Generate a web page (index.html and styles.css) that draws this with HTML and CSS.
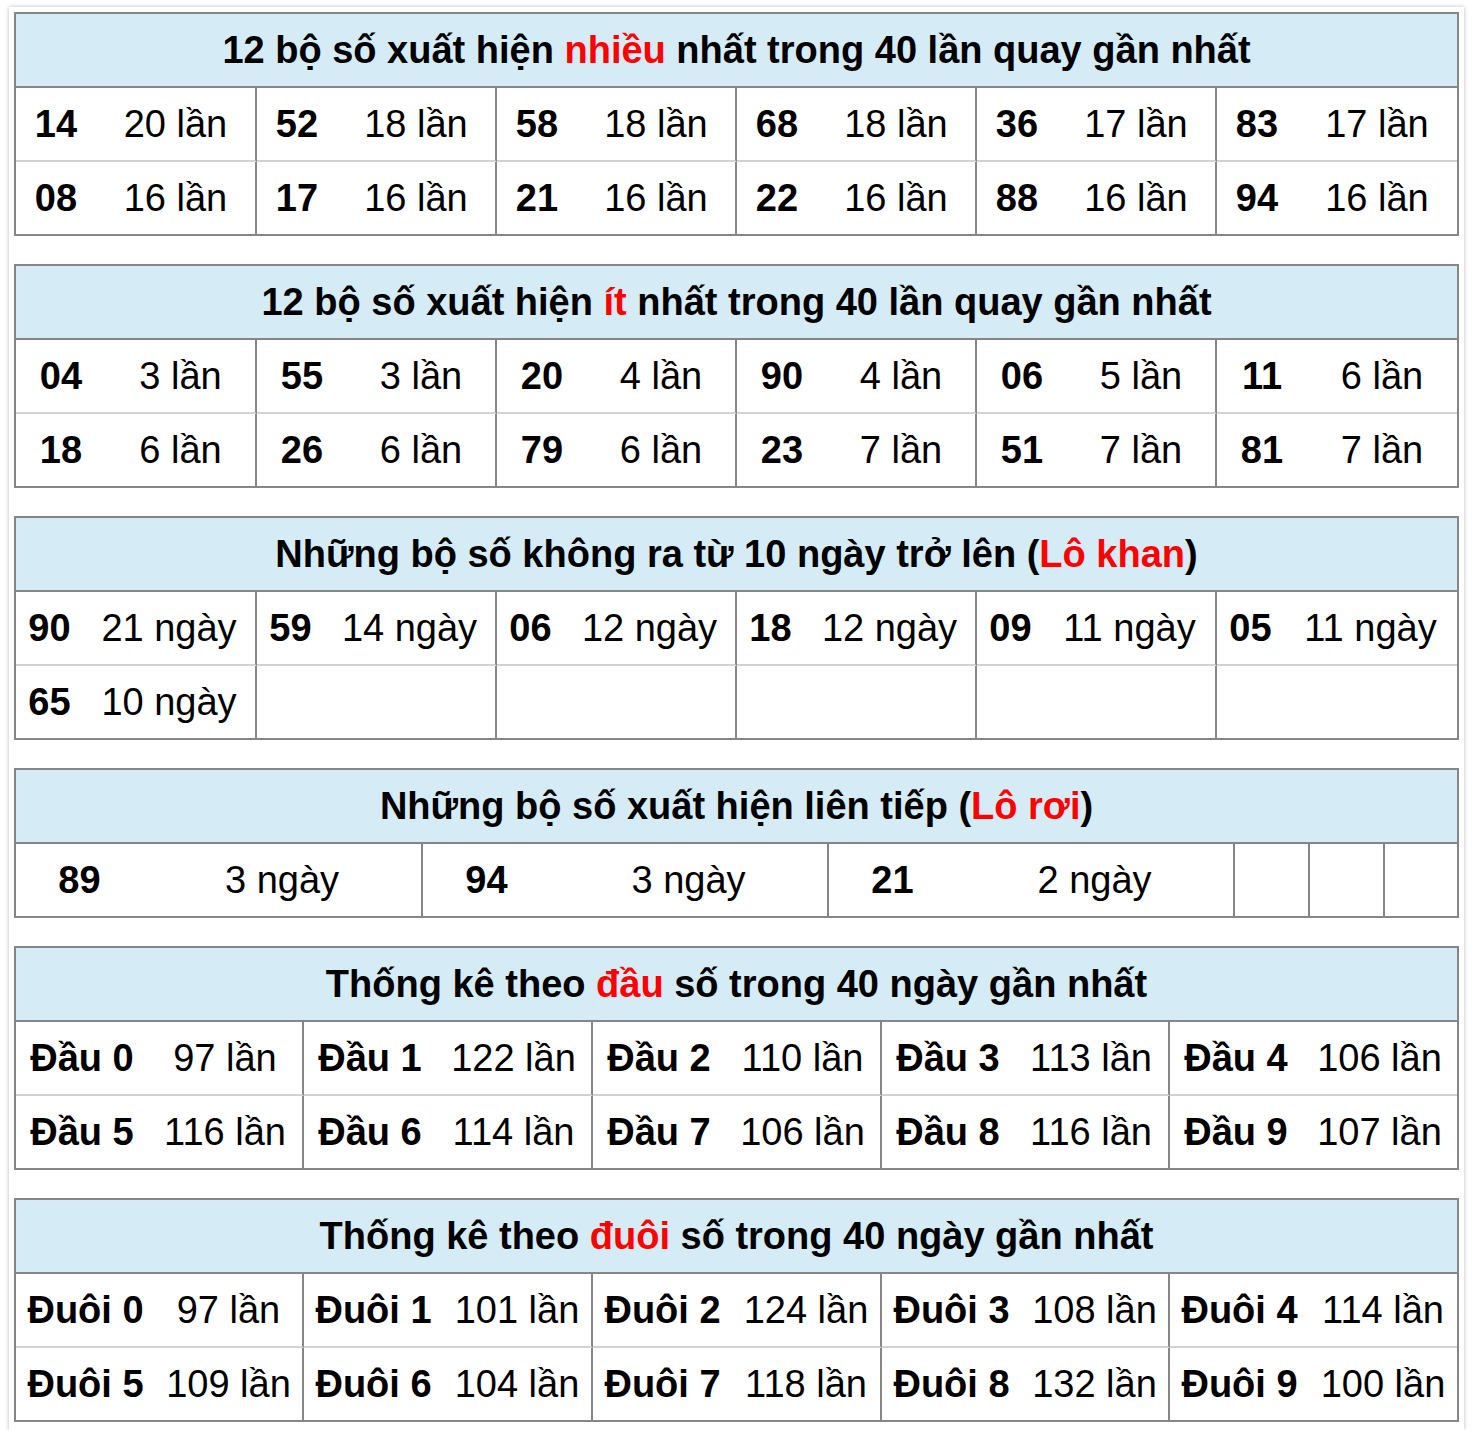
FILE: index.html
```html
<!DOCTYPE html>
<html lang="vi">
<head>
<meta charset="utf-8">
<title>Thống kê lô tô</title>
<link rel="stylesheet" href="styles.css">
</head>
<body>
<div class="page">

  <section class="stat stat-most">
    <h2 class="stat-head">12 bộ số xuất hiện <em>nhiều</em> nhất trong 40 lần quay gần nhất</h2>
    <div class="stat-row cols-6">
      <div class="pair"><b class="num">14</b><span class="cnt">20 lần</span></div>
      <div class="pair"><b class="num">52</b><span class="cnt">18 lần</span></div>
      <div class="pair"><b class="num">58</b><span class="cnt">18 lần</span></div>
      <div class="pair"><b class="num">68</b><span class="cnt">18 lần</span></div>
      <div class="pair"><b class="num">36</b><span class="cnt">17 lần</span></div>
      <div class="pair"><b class="num">83</b><span class="cnt">17 lần</span></div>
    </div>
    <div class="stat-row cols-6">
      <div class="pair"><b class="num">08</b><span class="cnt">16 lần</span></div>
      <div class="pair"><b class="num">17</b><span class="cnt">16 lần</span></div>
      <div class="pair"><b class="num">21</b><span class="cnt">16 lần</span></div>
      <div class="pair"><b class="num">22</b><span class="cnt">16 lần</span></div>
      <div class="pair"><b class="num">88</b><span class="cnt">16 lần</span></div>
      <div class="pair"><b class="num">94</b><span class="cnt">16 lần</span></div>
    </div>
  </section>

  <section class="stat stat-least">
    <h2 class="stat-head">12 bộ số xuất hiện <em>ít</em> nhất trong 40 lần quay gần nhất</h2>
    <div class="stat-row cols-6">
      <div class="pair"><b class="num">04</b><span class="cnt">3 lần</span></div>
      <div class="pair"><b class="num">55</b><span class="cnt">3 lần</span></div>
      <div class="pair"><b class="num">20</b><span class="cnt">4 lần</span></div>
      <div class="pair"><b class="num">90</b><span class="cnt">4 lần</span></div>
      <div class="pair"><b class="num">06</b><span class="cnt">5 lần</span></div>
      <div class="pair"><b class="num">11</b><span class="cnt">6 lần</span></div>
    </div>
    <div class="stat-row cols-6">
      <div class="pair"><b class="num">18</b><span class="cnt">6 lần</span></div>
      <div class="pair"><b class="num">26</b><span class="cnt">6 lần</span></div>
      <div class="pair"><b class="num">79</b><span class="cnt">6 lần</span></div>
      <div class="pair"><b class="num">23</b><span class="cnt">7 lần</span></div>
      <div class="pair"><b class="num">51</b><span class="cnt">7 lần</span></div>
      <div class="pair"><b class="num">81</b><span class="cnt">7 lần</span></div>
    </div>
  </section>

  <section class="stat stat-khan">
    <h2 class="stat-head">Những bộ số không ra từ 10 ngày trở lên (<em>Lô khan</em>)</h2>
    <div class="stat-row cols-6">
      <div class="pair"><b class="num">90</b><span class="cnt">21 ngày</span></div>
      <div class="pair"><b class="num">59</b><span class="cnt">14 ngày</span></div>
      <div class="pair"><b class="num">06</b><span class="cnt">12 ngày</span></div>
      <div class="pair"><b class="num">18</b><span class="cnt">12 ngày</span></div>
      <div class="pair"><b class="num">09</b><span class="cnt">11 ngày</span></div>
      <div class="pair"><b class="num">05</b><span class="cnt">11 ngày</span></div>
    </div>
    <div class="stat-row cols-6">
      <div class="pair"><b class="num">65</b><span class="cnt">10 ngày</span></div>
      <div class="pair"></div>
      <div class="pair"></div>
      <div class="pair"></div>
      <div class="pair"></div>
      <div class="pair"></div>
    </div>
  </section>

  <section class="stat stat-roi">
    <h2 class="stat-head">Những bộ số xuất hiện liên tiếp (<em>Lô rơi</em>)</h2>
    <div class="stat-row cols-roi">
      <div class="pair"><b class="num">89</b><span class="cnt">3 ngày</span></div>
      <div class="pair"><b class="num">94</b><span class="cnt">3 ngày</span></div>
      <div class="pair"><b class="num">21</b><span class="cnt">2 ngày</span></div>
      <div class="pair"></div>
      <div class="pair"></div>
      <div class="pair"></div>
    </div>
  </section>

  <section class="stat stat-dau">
    <h2 class="stat-head">Thống kê theo <em>đầu</em> số trong 40 ngày gần nhất</h2>
    <div class="stat-row cols-5">
      <div class="pair"><b class="num">Đầu 0</b><span class="cnt">97 lần</span></div>
      <div class="pair"><b class="num">Đầu 1</b><span class="cnt">122 lần</span></div>
      <div class="pair"><b class="num">Đầu 2</b><span class="cnt">110 lần</span></div>
      <div class="pair"><b class="num">Đầu 3</b><span class="cnt">113 lần</span></div>
      <div class="pair"><b class="num">Đầu 4</b><span class="cnt">106 lần</span></div>
    </div>
    <div class="stat-row cols-5">
      <div class="pair"><b class="num">Đầu 5</b><span class="cnt">116 lần</span></div>
      <div class="pair"><b class="num">Đầu 6</b><span class="cnt">114 lần</span></div>
      <div class="pair"><b class="num">Đầu 7</b><span class="cnt">106 lần</span></div>
      <div class="pair"><b class="num">Đầu 8</b><span class="cnt">116 lần</span></div>
      <div class="pair"><b class="num">Đầu 9</b><span class="cnt">107 lần</span></div>
    </div>
  </section>

  <section class="stat stat-duoi">
    <h2 class="stat-head">Thống kê theo <em>đuôi</em> số trong 40 ngày gần nhất</h2>
    <div class="stat-row cols-5">
      <div class="pair"><b class="num">Đuôi 0</b><span class="cnt">97 lần</span></div>
      <div class="pair"><b class="num">Đuôi 1</b><span class="cnt">101 lần</span></div>
      <div class="pair"><b class="num">Đuôi 2</b><span class="cnt">124 lần</span></div>
      <div class="pair"><b class="num">Đuôi 3</b><span class="cnt">108 lần</span></div>
      <div class="pair"><b class="num">Đuôi 4</b><span class="cnt">114 lần</span></div>
    </div>
    <div class="stat-row cols-5">
      <div class="pair"><b class="num">Đuôi 5</b><span class="cnt">109 lần</span></div>
      <div class="pair"><b class="num">Đuôi 6</b><span class="cnt">104 lần</span></div>
      <div class="pair"><b class="num">Đuôi 7</b><span class="cnt">118 lần</span></div>
      <div class="pair"><b class="num">Đuôi 8</b><span class="cnt">132 lần</span></div>
      <div class="pair"><b class="num">Đuôi 9</b><span class="cnt">100 lần</span></div>
    </div>
  </section>

</div>
</body>
</html>
```

FILE: styles.css
```css
html, body {
  margin: 0;
  padding: 0;
  background: #ffffff;
}

body {
  font-family: "Liberation Sans", Arial, Helvetica, sans-serif;
  color: #000;
}

.page {
  margin: 7px 10px 0 9px;
  padding: 5px 5px 8px 5px;
  box-shadow: 0 0 4px rgba(0, 0, 0, 0.28);
  background: #fff;
}

.stat {
  border: 2px solid #868686;
  margin-bottom: 28px;
}

.stat:last-child {
  margin-bottom: 0;
}

.stat-head {
  margin: 0;
  height: 72px;
  line-height: 72px;
  border-bottom: 2px solid #868686;
  background: #d5ebf5;
  font-size: 38px;
  font-weight: bold;
  text-align: center;
  white-space: nowrap;
}

.stat-head em {
  font-style: normal;
  color: #ff0000;
}

.stat-row {
  display: grid;
  height: 74px;
}

.stat-row:last-child {
  height: 72px;
}

.cols-6 {
  grid-template-columns: 241px repeat(4, 240px) 1fr;
}

.cols-5 {
  grid-template-columns: 288px 289px 289px 288px 1fr;
}

.cols-roi {
  grid-template-columns: 407px 406px 406px 75px 75px 1fr;
}

.pair {
  display: flex;
  align-items: center;
  border-right: 2px solid #868686;
  border-bottom: 2px solid #d2d2d2;
  font-size: 38px;
  line-height: 44px;
  white-space: nowrap;
  min-width: 0;
}

.stat-row:last-child .pair {
  border-bottom: none;
}

.pair:last-child {
  border-right: none;
}

.num {
  font-weight: bold;
  text-align: center;
  flex: 0 0 auto;
}

.cnt {
  flex: 1 1 auto;
  text-align: center;
}

.stat-most .num { width: 80px; }
.stat-least .num { width: 90px; }
.stat-khan .num { width: 67px; }
.stat-roi .num { width: 127px; }
.stat-dau .num { width: 132px; }
.stat-duoi .num { width: 139px; }
```
